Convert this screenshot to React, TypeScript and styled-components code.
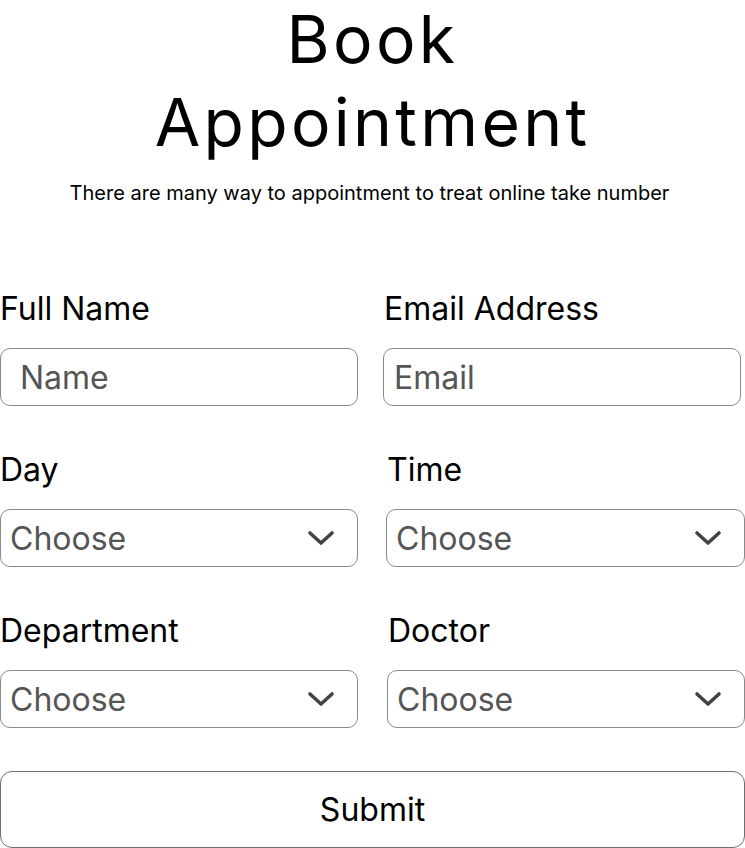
import React from "react";
import styled, { createGlobalStyle } from "styled-components";

const Global = createGlobalStyle`
  html, body { margin: 0; padding: 0; background: #fff; }
  body { font-family: Inter, "Noto Sans", sans-serif; color: #000; }
  * { box-sizing: border-box; }
`;

const Page = styled.div`
  width: 745px;
  display: flex;
  flex-direction: column;
  align-items: stretch;
`;

const Title = styled.h1`
  margin: -2px 0 0;
  font-family: Inter, "Noto Sans", sans-serif;
  font-weight: 400;
  font-size: 66px;
  line-height: 83px;
  letter-spacing: 3.3px;
  text-align: center;
  color: #000;
`;

const Subtitle = styled.p`
  margin: 17px 0 0;
  padding-right: 6px;
  font-size: 20px;
  line-height: 24px;
  text-align: center;
  color: #000;
`;

const Form = styled.form`
  margin-top: 85px;
  display: flex;
  flex-direction: column;
`;

const Grid = styled.div`
  display: grid;
  grid-template-columns: 358px 1fr;
  row-gap: 45px;
`;

const Field = styled.div<{ $offset?: number; $trim?: number }>`
  display: flex;
  flex-direction: column;
  gap: 20px;
  padding-left: ${(p) => p.$offset ?? 0}px;
  padding-right: ${(p) => p.$trim ?? 0}px;
`;

const Label = styled.label<{ $shift?: number }>`
  font-size: 32px;
  line-height: 38px;
  padding-left: ${(p) => p.$shift ?? 0}px;
  color: #000;
`;

const Control = styled.div`
  position: relative;
  height: 58px;
`;

const TextInput = styled.input<{ $pad: number }>`
  width: 100%;
  height: 58px;
  border: 1px solid #8a8a8a;
  border-radius: 10px;
  padding: 0 0 0 ${(p) => p.$pad}px;
  font-family: Inter, "Noto Sans", sans-serif;
  font-size: 32px;
  color: #000;
  background: #fff;
  outline: none;
  &::placeholder { color: #555; }
`;

const SelectBox = styled.div`
  width: 100%;
  height: 58px;
  border: 1px solid #8a8a8a;
  border-radius: 10px;
  padding: 0 0 0 9px;
  display: flex;
  align-items: center;
  justify-content: space-between;
  font-size: 32px;
  color: #555;
  background: #fff;
`;

const Chevron = styled.svg`
  width: 28px;
  height: 18px;
  margin-right: 22px;
  flex: none;
`;

const Submit = styled.button`
  margin-top: 43px;
  height: 77px;
  width: 745px;
  border: 1px solid #6e6e6e;
  border-radius: 12px;
  background: #fff;
  font-family: Inter, "Noto Sans", sans-serif;
  font-size: 32px;
  color: #000;
`;

const Select = () => (
  <Control>
    <SelectBox>
      <span>Choose</span>
      <Chevron viewBox="0 0 28 18">
        <path d="M3 4 L14 14 L25 4" fill="none" stroke="#444" strokeWidth="3.6" strokeLinecap="round" strokeLinejoin="round" />
      </Chevron>
    </SelectBox>
  </Control>
);

export default function App() {
  return (
    <Page>
      <Global />
      <Title>
        Book
        <br />
        Appointment
      </Title>
      <Subtitle>There are many way to appointment to treat online take number</Subtitle>
      <Form onSubmit={(e) => e.preventDefault()}>
        <Grid>
          <Field>
            <Label>Full Name</Label>
            <Control>
              <TextInput $pad={19} placeholder="Name" />
            </Control>
          </Field>
          <Field $offset={25} $trim={4}>
            <Label $shift={1}>Email Address</Label>
            <Control>
              <TextInput $pad={10} placeholder="Email" />
            </Control>
          </Field>
          <Field>
            <Label>Day</Label>
            <Select />
          </Field>
          <Field $offset={28}>
            <Label $shift={1}>Time</Label>
            <Select />
          </Field>
          <Field>
            <Label>Department</Label>
            <Select />
          </Field>
          <Field $offset={29}>
            <Label $shift={1}>Doctor</Label>
            <Select />
          </Field>
        </Grid>
        <Submit type="submit">Submit</Submit>
      </Form>
    </Page>
  );
}
